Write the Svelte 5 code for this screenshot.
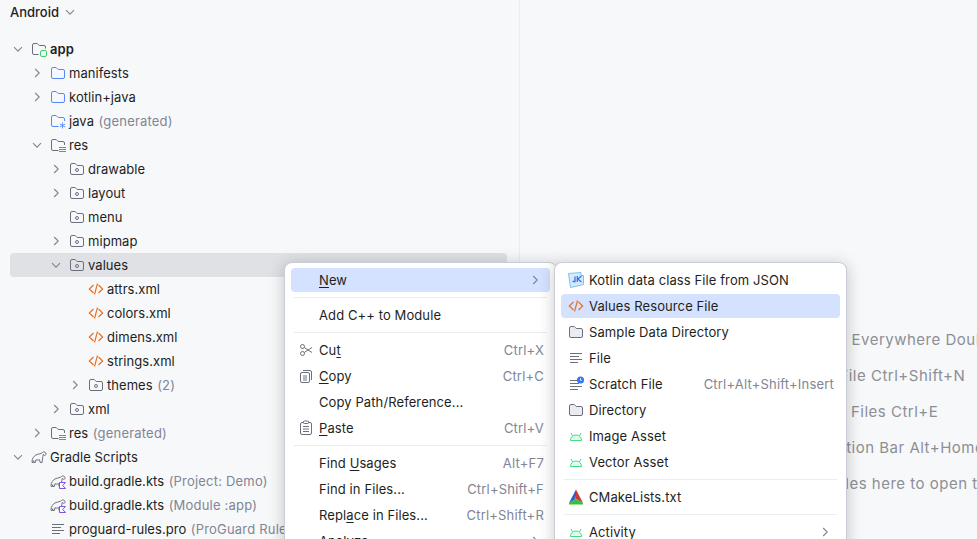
<script lang="ts">
	type Row = {
		label: string;
		hint?: string;
		depth: number;
		icon: string;
		arrow?: "open" | "closed";
		bold?: boolean;
		selected?: boolean;
	};

	const rows: Row[] = [
		{ label: "app", depth: 0, icon: "module", arrow: "open", bold: true },
		{ label: "manifests", depth: 1, icon: "source", arrow: "closed" },
		{ label: "kotlin+java", depth: 1, icon: "source", arrow: "closed" },
		{ label: "java", hint: "(generated)", depth: 1, icon: "generated" },
		{ label: "res", depth: 1, icon: "resroot", arrow: "open" },
		{ label: "drawable", depth: 2, icon: "resdir", arrow: "closed" },
		{ label: "layout", depth: 2, icon: "resdir", arrow: "closed" },
		{ label: "menu", depth: 2, icon: "resdir" },
		{ label: "mipmap", depth: 2, icon: "resdir", arrow: "closed" },
		{ label: "values", depth: 2, icon: "resdir", arrow: "open", selected: true },
		{ label: "attrs.xml", depth: 3, icon: "xml" },
		{ label: "colors.xml", depth: 3, icon: "xml" },
		{ label: "dimens.xml", depth: 3, icon: "xml" },
		{ label: "strings.xml", depth: 3, icon: "xml" },
		{ label: "themes", hint: "(2)", depth: 3, icon: "resdir", arrow: "closed" },
		{ label: "xml", depth: 2, icon: "resdir", arrow: "closed" },
		{ label: "res", hint: "(generated)", depth: 1, icon: "resroot", arrow: "closed" },
		{ label: "Gradle Scripts", depth: 0, icon: "gradle", arrow: "open" },
		{ label: "build.gradle.kts", hint: "(Project: Demo)", depth: 1, icon: "gradlekts" },
		{ label: "build.gradle.kts", hint: "(Module :app)", depth: 1, icon: "gradlekts" },
		{ label: "proguard-rules.pro", hint: "(ProGuard Rules for \":app\")", depth: 1, icon: "lines" }
	];

	// a label is [before, mnemonic, after]
	type Item = {
		sep?: boolean;
		label?: string[];
		icon?: string;
		keys?: string;
		more?: boolean;
		active?: boolean;
	};

	const mainMenu: Item[] = [
		{ label: ["", "N", "ew"], more: true, active: true },
		{ sep: true },
		{ label: ["Add C++ to Module"] },
		{ sep: true },
		{ label: ["Cu", "t", ""], icon: "cut", keys: "Ctrl+X" },
		{ label: ["", "C", "opy"], icon: "copy", keys: "Ctrl+C" },
		{ label: ["Copy Path/Reference..."] },
		{ label: ["", "P", "aste"], icon: "paste", keys: "Ctrl+V" },
		{ sep: true },
		{ label: ["Find ", "U", "sages"], keys: "Alt+F7" },
		{ label: ["Find in Files..."], keys: "Ctrl+Shift+F" },
		{ label: ["Repl", "a", "ce in Files..."], keys: "Ctrl+Shift+R" },
		{ label: ["Analyze"], more: true }
	];

	const newMenu: Item[] = [
		{ label: ["Kotlin data class File from JSON"], icon: "json" },
		{ label: ["Values Resource File"], icon: "xml", active: true },
		{ label: ["Sample Data Directory"], icon: "folder" },
		{ label: ["File"], icon: "lines" },
		{ label: ["Scratch File"], icon: "scratch", keys: "Ctrl+Alt+Shift+Insert" },
		{ label: ["Directory"], icon: "folder" },
		{ label: ["Image Asset"], icon: "android" },
		{ label: ["Vector Asset"], icon: "android" },
		{ sep: true },
		{ label: ["CMakeLists.txt"], icon: "cmake" },
		{ sep: true },
		{ label: ["Activity"], icon: "android", more: true }
	];

	const hints = [
		"Search Everywhere Double Shift",
		"Go to File Ctrl+Shift+N",
		"Recent Files Ctrl+E",
		"Navigation Bar Alt+Home",
		"Drop files here to open them"
	];
</script>

{#snippet chevron(dir: string)}
	<svg class="chevron" width="12" height="12" viewBox="0 0 12 12" fill="none" stroke="#818594" stroke-width="1.1">
		{#if dir === "open"}
			<path d="M2 4.200 6 8.200l4-4" />
		{:else}
			<path d="M4.200 2 8.200 6l-4 4" />
		{/if}
	</svg>
{/snippet}

{#snippet gradlePath()}
	<path
		d="M1 13.500C.8 9.500 3 6.500 6 5.500c2-.7 4-.5 5.500-2 1-1 3-.6 3.500 1 .3 1-.5 2-1.500 1.800L12.200 5.500c-.6 2.500-.4 4.500-1.200 8H9.200l-.6-2.800c-1.200.5-2.500.5-3.600 0l-.6 2.800H3l-.3-1.800-.4 1.800z"
		stroke="#6c707e"
		stroke-width="1"
		stroke-linejoin="round"
		fill="#f7f8fa"
	/>
{/snippet}

{#snippet icon(name: string)}
	<svg class="icon" width="16" height="16" viewBox="0 0 16 16" fill="none">
		{#if name === "source" || name === "folder"}
			<path
				d="M1.500 4A1.500 1.500 0 0 1 3 2.500h3.200l2 2H13A1.500 1.500 0 0 1 14.500 6v6a1.500 1.500 0 0 1-1.500 1.500H3A1.500 1.500 0 0 1 1.500 12z"
				fill={name === "source" ? "#f5f8fe" : "#ebecf0"}
				stroke={name === "source" ? "#548af7" : "#6c707e"}
			/>
		{:else if name === "module"}
			<path d="M7.500 13.500H3A1.500 1.500 0 0 1 1.500 12V4A1.500 1.500 0 0 1 3 2.500h3.200l2 2H13A1.500 1.500 0 0 1 14.500 6v1.500" stroke="#6c707e" />
			<rect x="9.500" y="9.500" width="6" height="6" rx="1.500" fill="#f2fcf3" stroke="#3fcf6f" />
		{:else if name === "generated"}
			<path d="M8.500 13.500H3A1.500 1.500 0 0 1 1.500 12V4A1.500 1.500 0 0 1 3 2.500h3.200l2 2H13A1.500 1.500 0 0 1 14.500 6v2" stroke="#548af7" />
			<path d="M12.500 9.500v6M9.800 11l5.400 3M15.200 11l-5.400 3" stroke="#548af7" stroke-width=".9" />
		{:else if name === "resroot"}
			<path d="M8.500 13.500H3A1.500 1.500 0 0 1 1.500 12V4A1.500 1.500 0 0 1 3 2.500h3.200l2 2H13A1.500 1.500 0 0 1 14.500 6v2" stroke="#6c707e" />
			<path d="M9 10.500h7M9 12.500h7M9 14.500h7" stroke="#e66d17" />
		{:else if name === "resdir"}
			<path
				d="M1.500 4A1.500 1.500 0 0 1 3 2.500h3.200l2 2H13A1.500 1.500 0 0 1 14.500 6v6a1.500 1.500 0 0 1-1.500 1.500H3A1.500 1.500 0 0 1 1.500 12z"
				stroke="#6c707e"
			/>
			<circle cx="8" cy="9" r="1.500" stroke="#6c707e" />
		{:else if name === "xml"}
			<path d="M5.500 4 1.300 8l4.200 4M10.500 4l4.200 4-4.200 4" stroke="#e66d17" stroke-width="1.100" />
			<path d="M9.500 2.500 6.500 13.500" stroke="#e66d17" stroke-width="1.100" />
		{:else if name === "gradle"}
			{@render gradlePath()}
		{:else if name === "gradlekts"}
			{@render gradlePath()}
			<path d="M9.500 9.500h6l-2.800 3 2.800 3h-6z" fill="#fbfaff" stroke="#834df0" stroke-linejoin="round" />
		{:else if name === "lines"}
			<path d="M2 3.500h12M2 6.500h9M2 9.500h12M2 12.500h8" stroke="#6c707e" />
		{:else if name === "scratch"}
			<path d="M2 4.500h8M2 7.500h9M2 10.500h12M2 13.500h8" stroke="#6c707e" />
			<circle cx="12.500" cy="4" r="3.500" fill="#3574f0" />
			<path d="M12.500 2v2.300h1.500" stroke="#fff" stroke-width=".8" />
		{:else if name === "android"}
			<path d="M2.500 12.500c0-3 2.300-5.500 5.500-5.500s5.500 2.500 5.500 5.500z" fill="#f1fcf3" stroke="#3ddc84" />
			<path d="M4.500 7.800 3 5M11.500 7.800 13 5" stroke="#3ddc84" />
			<path d="M5.800 10h.5M9.700 10h.5" stroke="#3ddc84" />
		{:else if name === "json"}
			<path d="M.5 1.500 13 .5v3h2.500v9L2.500 15.500z" fill="#d6eafb" stroke="#7cc1f5" stroke-width="1" />
			<path d="M7 4.500v5H4.500M9.300 4v6M13.500 4 9.800 7l3.700 3" stroke="#3574f0" stroke-width="1.300" />
		{:else if name === "cmake"}
			<path d="M8 .5 1 14 8 10z" fill="#2f5fc4" />
			<path d="M8 .5V10l7 4z" fill="#cf3838" />
			<path d="M1 14l7-4 7 4v1.500H1z" fill="#35c23a" />
			<path d="M5.500 11.500 8 10V6.500z" fill="#8a8a8a" />
		{:else if name === "cut"}
			<circle cx="4.500" cy="4.500" r="2" stroke="#6c707e" />
			<circle cx="4.500" cy="11.500" r="2" stroke="#6c707e" />
			<path d="M6.200 5.500 14 10.500M6.200 10.500 14 5.500" stroke="#6c707e" />
		{:else if name === "copy"}
			<rect x="2.500" y="4.500" width="9" height="10" rx="1.500" stroke="#6c707e" />
			<path d="M5 8h4M5 10h4M5 12h4" stroke="#6c707e" />
			<path d="M5 2.500h7A1.500 1.500 0 0 1 13.500 4v8" stroke="#6c707e" />
		{:else if name === "paste"}
			<rect x="2.500" y="2.500" width="11" height="12" rx="1.500" stroke="#6c707e" />
			<rect x="5.500" y="1" width="5" height="2.500" rx=".8" fill="#fff" stroke="#6c707e" />
			<path d="M5 6.500h6M5 9h6M5 11.500h6" stroke="#6c707e" />
		{/if}
	</svg>
{/snippet}

{#snippet menu(items: Item[], cls: string)}
	<div class="menu {cls}">
		{#each items as item}
			{#if item.sep}
				<div class="sep"></div>
			{:else}
				<div class="item" class:active={item.active}>
					<span class="item-icon">
						{#if item.icon}{@render icon(item.icon)}{/if}
					</span>
					<span class="item-label">{item.label?.[0]}{#if item.label?.[1]}<u>{item.label[1]}</u>{item.label[2]}{/if}</span>
					{#if item.keys}<span class="keys">{item.keys}</span>{/if}
					{#if item.more}<span class="more">{@render chevron("closed")}</span>{/if}
				</div>
			{/if}
		{/each}
	</div>
{/snippet}

<div class="ide">
	<aside class="project">
		<header class="project-head">
			<span>Android</span>
			{@render chevron("open")}
		</header>
		<div class="tree">
			{#each rows as row}
				<div class="row" class:selected={row.selected} style="padding-left: {row.depth * 19}px">
					<span class="arrow">
						{#if row.arrow}{@render chevron(row.arrow)}{/if}
					</span>
					{@render icon(row.icon)}
					<span class="name" class:bold={row.bold}>{row.label}</span>
					{#if row.hint}<span class="hint">{row.hint}</span>{/if}
				</div>
			{/each}
		</div>
	</aside>

	<main class="editor">
		{#each hints as line}
			<div class="editor-hint">{line}</div>
		{/each}
	</main>

	{@render menu(mainMenu, "main-menu")}
	{@render menu(newMenu, "new-menu")}
</div>

<style>
	:global(body) {
		overflow: hidden;
		background: #f7f8fa;
	}

	.ide {
		position: relative;
		display: flex;
		width: 977px;
		height: 539px;
		overflow: hidden;
		background: #f7f8fa;
		color: #1e1f22;
		font-family: Inter, "Liberation Sans", sans-serif;
		font-size: 13px;
		line-height: 16px;
	}

	.project {
		flex: none;
		box-sizing: border-box;
		width: 520px;
		border-right: 1px solid #ebecf0;
	}

	.project-head {
		display: flex;
		align-items: center;
		gap: 5px;
		height: 24px;
		padding-left: 10px;
		font-weight: 500;
	}

	.tree {
		display: flex;
		flex-direction: column;
		width: 497px;
		margin: 13px 0 0 10px;
	}

	.row {
		display: flex;
		flex: none;
		align-items: center;
		height: 24px;
		border-radius: 4px;
		white-space: nowrap;
		letter-spacing: 0.05px;
	}

	.row.selected {
		background: #dfe1e5;
	}

	.arrow {
		display: flex;
		flex: none;
		justify-content: center;
		width: 16px;
		margin-right: 5px;
	}

	.chevron {
		flex: none;
	}

	.icon {
		flex: none;
	}

	.name {
		margin-left: 3px;
	}

	.bold {
		font-weight: 600;
	}

	.hint {
		margin-left: 4.500px;
		color: #818594;
		letter-spacing: 0.2px;
	}

	.editor {
		display: flex;
		flex: 1;
		flex-direction: column;
		gap: 20px;
		padding: 332px 0 0 274px;
		white-space: nowrap;
		color: #8c8f96;
		font-size: 15px;
		letter-spacing: 0.5px;
	}

	.menu {
		position: absolute;
		top: 262px;
		display: flex;
		flex-direction: column;
		box-sizing: border-box;
		height: 300px;
		padding: 4px 6px;
		border: 1px solid #c9ccd6;
		border-radius: 8px;
		background: #fff;
		box-shadow: 0 2px 16px rgba(0, 0, 0, 0.22);
	}

	.main-menu {
		left: 284px;
		width: 273px;
	}

	.new-menu {
		left: 554px;
		width: 293px;
	}

	.item {
		display: flex;
		flex: none;
		align-items: center;
		box-sizing: border-box;
		height: 24px;
		margin: 1px 0;
		padding-right: 6px;
		border-radius: 4px;
		white-space: nowrap;
		letter-spacing: 0.1px;
	}

	.item.active {
		background: #d4e2ff;
	}

	.item-icon {
		display: flex;
		flex: none;
		width: 21px;
		margin-left: 7px;
	}

	.item-label {
		flex: 1;
	}

	.item u {
		text-underline-offset: 2px;
	}

	.keys {
		color: #818594;
		letter-spacing: 0.2px;
	}

	.more {
		display: flex;
		margin-right: 3px;
	}

	.sep {
		flex: none;
		height: 1px;
		margin: 4px 3px;
		background: #ebecf0;
	}
</style>
